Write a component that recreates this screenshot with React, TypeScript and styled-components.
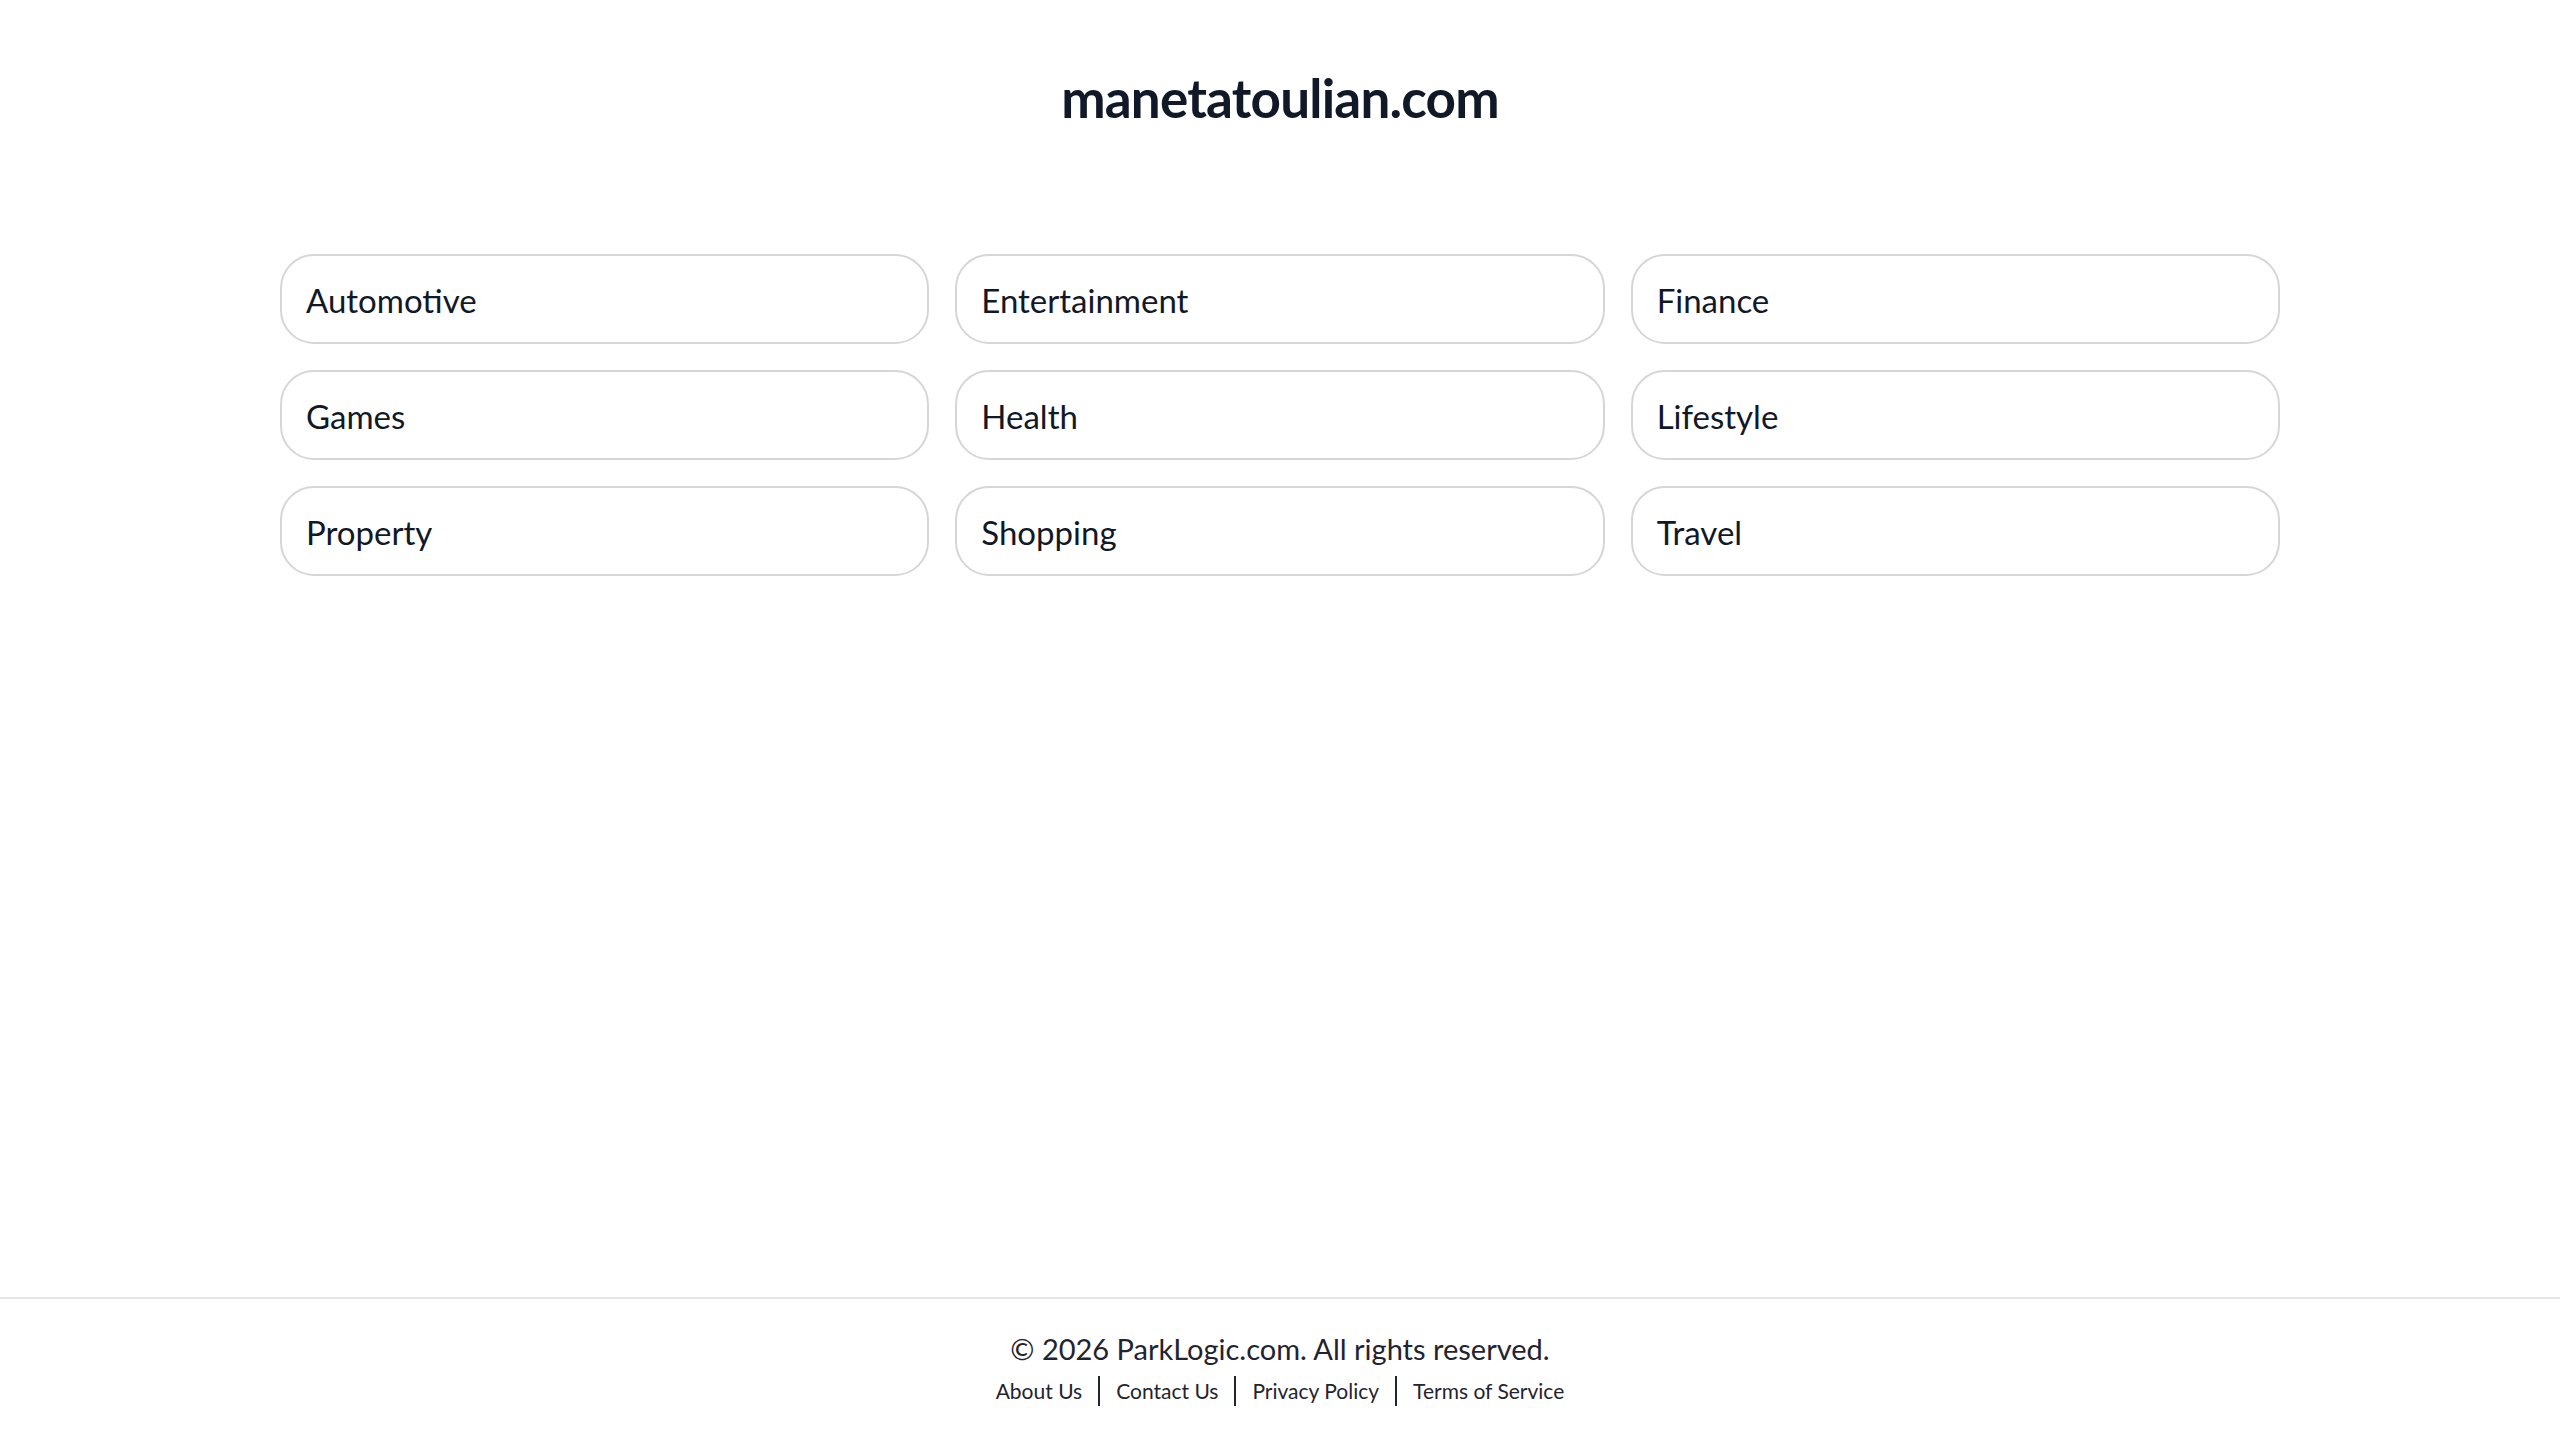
import React from 'react'
import styled, { createGlobalStyle } from 'styled-components'

const GlobalStyle = createGlobalStyle`
  html, body {
    margin: 0;
    padding: 0;
    background: #ffffff;
  }
  body {
    font-family: Lato, "Open Sans", "Liberation Sans", sans-serif;
    color: #111827;
  }
`

const Page = styled.div`
  display: flex;
  flex-direction: column;
  min-height: 100vh;
`

const Header = styled.header`
  display: flex;
  justify-content: center;
  padding-top: 64px;
`

const Title = styled.h1`
  margin: 0;
  font-size: 53px;
  line-height: 68px;
  font-weight: 700;
  letter-spacing: -0.8px;
  color: #111827;
`

const Grid = styled.main`
  display: grid;
  grid-template-columns: repeat(3, 1fr);
  gap: 26px;
  width: 2000px;
  margin: 122px auto 0;
`

const Category = styled.a`
  display: flex;
  align-items: center;
  box-sizing: border-box;
  height: 90px;
  padding: 2px 24px 0;
  border: 2px solid #d6d6d9;
  border-radius: 34px;
  font-size: 33px;
  color: #111827;
  text-decoration: none;
`

const Footer = styled.footer`
  margin-top: auto;
  border-top: 2px solid #e5e5e7;
  display: flex;
  flex-direction: column;
  align-items: center;
  padding: 30px 0 34px;
`

const Copyright = styled.p`
  margin: 0;
  font-size: 29px;
  line-height: 40px;
  color: #1f2430;
`

const Links = styled.nav`
  display: flex;
  align-items: center;
  margin-top: 7px;
`

const FooterLink = styled.a<{ $first?: boolean }>`
  font-size: 21px;
  line-height: 30px;
  color: #1f2430;
  text-decoration: none;
  padding: 0 16px;
  border-left: ${(p) => (p.$first ? 'none' : '2px solid #1f2430')};
`

const CATEGORIES = [
  'Automotive',
  'Entertainment',
  'Finance',
  'Games',
  'Health',
  'Lifestyle',
  'Property',
  'Shopping',
  'Travel',
]

const FOOTER_LINKS = ['About Us', 'Contact Us', 'Privacy Policy', 'Terms of Service']

export default function App() {
  return (
    <Page>
      <GlobalStyle />
      <Header>
        <Title>manetatoulian.com</Title>
      </Header>
      <Grid>
        {CATEGORIES.map((c) => (
          <Category key={c} href="#">
            {c}
          </Category>
        ))}
      </Grid>
      <Footer>
        <Copyright>© 2026 ParkLogic.com. All rights reserved.</Copyright>
        <Links>
          {FOOTER_LINKS.map((l, i) => (
            <FooterLink key={l} href="#" $first={i === 0}>
              {l}
            </FooterLink>
          ))}
        </Links>
      </Footer>
    </Page>
  )
}
